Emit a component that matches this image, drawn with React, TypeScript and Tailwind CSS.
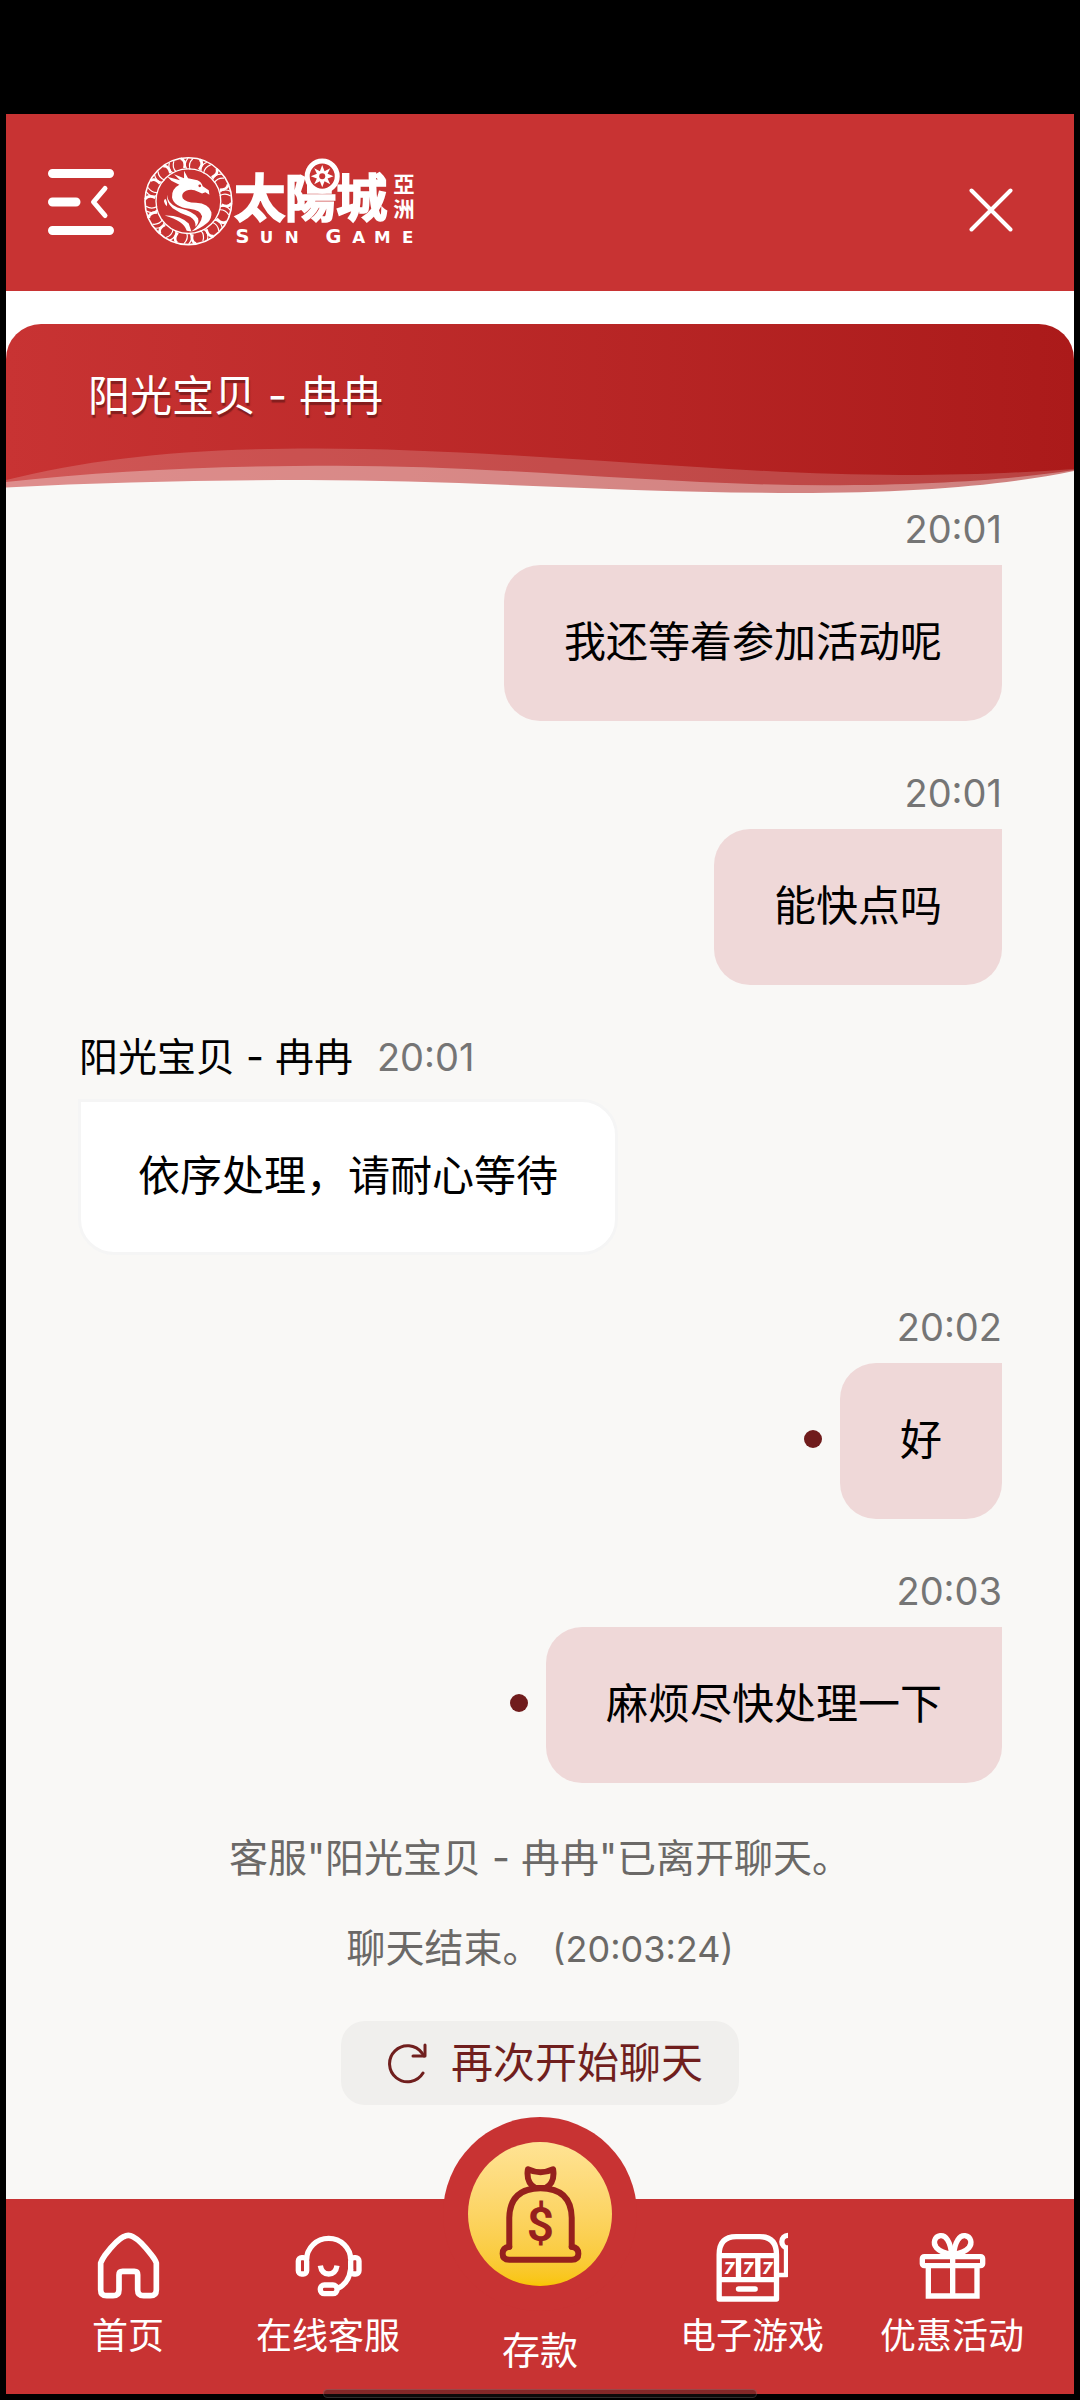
import type { ReactNode } from "react";

interface Message {
  id: number;
  time: string;
  text: string;
  author?: string;
  unread?: boolean;
}

interface NavEntry {
  label: string;
  icon: ReactNode;
}

const AGENT = "阳光宝贝 - 冉冉";

const MESSAGES: Message[] = [
  { id: 1, time: "20:01", text: "我还等着参加活动呢" },
  { id: 2, time: "20:01", text: "能快点吗" },
  { id: 3, time: "20:01", text: "依序处理，请耐心等待", author: AGENT },
  { id: 4, time: "20:02", text: "好", unread: true },
  { id: 5, time: "20:03", text: "麻烦尽快处理一下", unread: true },
];

const RING_STEPS = Array.from({ length: 14 }, (_, i) => (i * 360) / 14);

function MenuIcon() {
  return (
    <svg viewBox="0 0 66 66" className="h-[66px] w-[66px]" fill="none" stroke="currentColor" strokeLinecap="round" strokeLinejoin="round" aria-hidden>
      <path d="M4.500 4.500H61.500M4.500 33H28M4.500 61.500H61.500" strokeWidth="9" />
      <path d="M57 19.500L45.500 33L57 46.500" strokeWidth="5" />
    </svg>
  );
}

function Logo() {
  return (
    <svg viewBox="42 50 812 272" className="h-[91px] w-[271px]" fill="#fff" role="img" aria-label="太陽城亞洲 Sun Game">
      <g fill="none" stroke="#fff">
        <circle cx="175" cy="185" r="130" strokeWidth="5" />
        <circle cx="175" cy="185" r="97" strokeWidth="4" />
        {RING_STEPS.map((deg) => (
          <g key={deg} transform={`rotate(${deg} 175 185)`}>
            <path d="M152 58Q168 62 163 86" strokeWidth="8" />
            <path d="M174 56Q160 72 170 88M188 58Q174 72 180 90" strokeWidth="3.500" />
          </g>
        ))}
      </g>
      <path d="M162 94L174 116L202 122Q214 126 218 140L236 152L238 166L226 158L216 162L204 157Q186 146 168 154Q152 162 158 176Q166 188 198 190Q236 192 244 218Q246 236 232 250Q208 270 184 276Q214 252 216 230Q212 212 178 208Q132 202 126 174Q124 148 148 136L124 124L112 112L150 122L132 104L162 116Z" />
      <path d="M112 166Q112 192 142 204Q192 216 204 236Q208 250 196 262Q198 242 180 232Q150 222 128 206Q108 190 112 166Z" />
      <path d="M104 228Q150 226 176 252L184 276L170 274Q162 244 104 228Z" />
      <path d="M106 178Q96 184 110 200Q114 190 106 178ZM214 206Q232 214 222 242Q234 232 232 218Q228 204 214 206Z" />
      <circle cx="209" cy="139" r="4" fill="#c83333" />
      <text x="312 464 617" y="232" fontSize="154" fontFamily="'Noto Sans CJK TC', sans-serif" fontWeight="700" stroke="#fff" strokeWidth="5">
        太陽城
      </text>
      <text x="789 789" y="158 232" fontSize="64" fontFamily="'Noto Sans CJK TC', sans-serif" fontWeight="700">
        亞洲
      </text>
      <circle cx="576" cy="110" r="45" fill="#c83333" stroke="#fff" strokeWidth="15" />
      <path d="M576 77L583 95L600 86L592 103L610 110L592 117L600 134L583 125L576 143L569 125L552 134L560 117L542 110L560 103L552 86L569 95Z" />
      <circle cx="576" cy="110" r="9" fill="#c83333" />
      <g fontFamily="'DejaVu Sans', sans-serif" fontWeight="700">
        <text y="310" fontSize="58" x="316 586">SG</text>
        <text y="310" fontSize="50" x="389 464 666 731 815">UNAME</text>
      </g>
    </svg>
  );
}

function CloseIcon() {
  return (
    <svg viewBox="0 0 44 44" className="size-11" fill="none" stroke="currentColor" strokeWidth="4" strokeLinecap="round" aria-hidden>
      <path d="M2.500 2.500L41.500 41.500M41.500 2.500L2.500 41.500" />
    </svg>
  );
}

function RestartIcon() {
  return (
    <svg viewBox="0 0 40 42" className="h-[42px] w-10" fill="none" stroke="currentColor" strokeWidth="3" strokeLinecap="round" strokeLinejoin="round" aria-hidden>
      <path d="M36 31A18 18 0 1 1 35 11L37 14" />
      <path d="M38 3V14H26" />
    </svg>
  );
}

const HOME_ICON = (
  <svg viewBox="280 157 189 201" className="h-[67px] w-[63px]" fill="none" stroke="currentColor" strokeWidth="17" strokeLinejoin="round" aria-hidden>
    <path d="M291 250Q296 238 305 225Q340 180 360 171Q374 163 388 171Q410 182 443 225Q455 240 458 250V330Q458 348 440 348H420Q402 348 402 330V285Q402 275 392 275H357Q346 275 346 285V330Q346 348 328 348H309Q291 348 291 330Z" />
  </svg>
);

const SERVICE_ICON = (
  <svg viewBox="880 157 201 201" className="size-[67px]" fill="none" stroke="currentColor" strokeWidth="16" aria-hidden>
    <rect x="890" y="234" width="25" height="49" rx="10" />
    <rect x="1047" y="234" width="25" height="49" rx="10" />
    <path d="M915 240A66 64 0 0 1 1047 240" />
    <path d="M1047 268Q1042 312 1006 327" />
    <rect x="956" y="316" width="50" height="26" rx="12" />
    <path d="M956 258Q960 283 981 283Q1002 283 1006 258" />
  </svg>
);

const SLOT_ICON = (
  <svg viewBox="172 157 215 210" className="h-[70px] w-[72px]" fill="none" stroke="currentColor" strokeWidth="16" strokeLinejoin="round" aria-hidden>
    <path d="M181 358V225Q181 171 232 171H303Q353 171 353 225V358Z" />
    <path d="M181 228H353M181 300H353M239 228V300M297 228V300" />
    <path d="M239 328H289" strokeLinecap="round" />
    <circle cx="388" cy="186" r="19" />
    <path d="M353 286H382V200" strokeWidth="14" />
    <g fill="currentColor" stroke="none" fontFamily="'DejaVu Sans', sans-serif" fontWeight="700" fontStyle="italic" fontSize="50">
      <text x="193" y="283">7</text>
      <text x="250" y="283">7</text>
      <text x="308" y="283">7</text>
    </g>
  </svg>
);

const GIFT_ICON = (
  <svg viewBox="778 157 201 201" className="size-[67px]" fill="none" stroke="currentColor" strokeWidth="16" aria-hidden>
    <rect x="788" y="231" width="181" height="27" rx="6" />
    <path d="M806 260V349H952V260M879 225V349" />
    <path d="M876 224C872 185 858 166 842 168C824 171 819 190 830 204C840 215 858 222 876 224Z" />
    <path d="M882 224C886 185 900 166 916 168C934 171 939 190 928 204C918 215 900 222 882 224Z" />
  </svg>
);

function MoneyBagIcon() {
  return (
    <svg viewBox="296 196 248 292" className="h-[97px] w-[83px]" fill="none" stroke="#96201d" strokeWidth="18" strokeLinecap="round" strokeLinejoin="round" aria-hidden>
      <path d="M326 439V352Q328 263 420 263Q512 263 514 352V439" />
      <path d="M326 439Q306 441 306 460Q306 478 326 478H514Q534 478 534 460Q534 441 514 439" />
      <path d="M382 206Q420 224 458 206Q464 246 436 262H404Q376 246 382 206Z" />
      <text x="420" y="421" textAnchor="middle" fill="#96201d" stroke="none" fontFamily="Roboto, sans-serif" fontWeight="600" fontSize="144">$</text>
    </svg>
  );
}

const NAV_LEFT: NavEntry[] = [
  { label: "首页", icon: HOME_ICON },
  { label: "在线客服", icon: SERVICE_ICON },
];

const NAV_RIGHT: NavEntry[] = [
  { label: "电子游戏", icon: SLOT_ICON },
  { label: "优惠活动", icon: GIFT_ICON },
];

function NavItem({ label, icon }: NavEntry) {
  return (
    <a href="#" className="flex flex-col items-center gap-2.5 pt-[33px] text-[36px] leading-[54px]">
      <span className="flex h-[67px] items-start">{icon}</span>
      {label}
    </a>
  );
}

function ChatBanner() {
  return (
    <div className="relative h-[170px] rounded-t-[35px] bg-linear-to-r from-[#c83333] to-[#ab1a1a]">
      <h1 className="px-[82px] pt-[42px] text-[42px] leading-[60px] text-white [text-shadow:1px_3px_1px_rgba(90,20,20,0.6)]">
        {AGENT}
      </h1>
      <svg viewBox="0 0 1068 50" preserveAspectRatio="none" className="absolute inset-x-0 bottom-0 h-[50px] w-full" fill="#f9f8f6" aria-hidden>
        <path d="M0 36C90 14 180 4.500 310 4.500C500 4.500 720 31 895 31C960 31 1010 29 1068 25V50H0Z" opacity="0.18" />
        <path d="M0 38C100 27 210 21.700 330 21.700C500 21.700 660 41.300 820 41.300C930 41.300 1010 35 1068 26V50H0Z" opacity="0.34" />
        <path d="M0 43.500C100 38 200 36 300 36C460 36 620 49 790 49C910 49 1000 41 1068 27V50H0Z" />
      </svg>
    </div>
  );
}

function MessageItem({ message }: { message: Message }) {
  if (message.author) {
    return (
      <li className="flex flex-col items-start gap-[18px]">
        <div className="flex gap-6 pl-px text-[39px] leading-[48px]">
          <span>{message.author}</span>
          <time className="text-[38px] text-[#757575]">{message.time}</time>
        </div>
        <p className="rounded-[36px] rounded-tl-none border-[3px] border-[#f5f5f5] bg-white px-[57px] pt-11 pb-[46px] text-[42px] leading-[60px]">
          {message.text}
        </p>
      </li>
    );
  }
  return (
    <li className="flex flex-col items-end gap-3">
      <time className="text-[38px] leading-[48px] text-[#757575]">{message.time}</time>
      <div className="flex items-center gap-[18px]">
        {message.unread && <span className="mb-1 size-[18px] rounded-full bg-[#701c1c]" />}
        <p className="rounded-[36px] rounded-tr-none bg-[#efd8d8] px-[60px] pt-[47px] pb-[49px] text-[42px] leading-[60px]">
          {message.text}
        </p>
      </div>
    </li>
  );
}

export default function App() {
  return (
    <div className="relative flex min-h-screen flex-col bg-black px-[6px] pt-[114px] pb-[6px] font-[Inter,'Noto_Sans_CJK_SC',sans-serif] text-black">
      <header className="flex h-[177px] items-center justify-between bg-[#c83333] pr-[61px] pb-[2px] pl-[42px] text-white">
        <div className="flex items-center gap-[30px]">
          <button type="button" aria-label="菜单">
            <MenuIcon />
          </button>
          <a href="#">
            <Logo />
          </a>
        </div>
        <button type="button" aria-label="关闭" className="pt-4">
          <CloseIcon />
        </button>
      </header>

      <main className="flex flex-1 flex-col bg-white pt-[33px]">
        <ChatBanner />
        <section className="flex-1 bg-[#f9f8f6] px-[72px] pt-[11px]">
          <ul className="flex flex-col gap-12">
            {MESSAGES.map((m) => (
              <MessageItem key={m.id} message={m} />
            ))}
          </ul>
          <div className="mt-[51px] flex flex-col items-center text-[39px] leading-[48px] text-[#6b6967]">
            <p>客服"{AGENT}"已离开聊天。</p>
            <p className="mt-[42px]">
              聊天结束。 <span className="text-[36px]">(20:03:24)</span>
            </p>
            <button type="button" className="mt-12 flex h-[84px] items-center gap-6 rounded-3xl bg-[#f0efed] pr-9 pl-[46px] text-[42px] leading-[60px] text-[#701f1e]">
              <RestartIcon />
              再次开始聊天
            </button>
          </div>
        </section>
      </main>

      <nav className="grid h-[195px] grid-cols-[188fr_212fr_212fr_212fr_188fr] bg-[#c83333] px-7 text-white">
        {NAV_LEFT.map((n) => (
          <NavItem key={n.label} {...n} />
        ))}
        <a href="#" className="-mt-[82px] flex flex-col items-center text-[38px] leading-[54px]">
          <span className="flex size-[194px] items-center justify-center rounded-full bg-[#c83333]">
            <span className="flex size-36 items-center justify-center rounded-full bg-linear-to-b from-[#ffe394] to-[#f9c500]">
              <MoneyBagIcon />
            </span>
          </span>
          <span className="mt-3">存款</span>
        </a>
        {NAV_RIGHT.map((n) => (
          <NavItem key={n.label} {...n} />
        ))}
      </nav>

      <div className="absolute inset-x-0 bottom-[2px] mx-auto h-[9px] w-[434px] rounded-full border border-white/15 bg-[#201a1a]/40" />
    </div>
  );
}
